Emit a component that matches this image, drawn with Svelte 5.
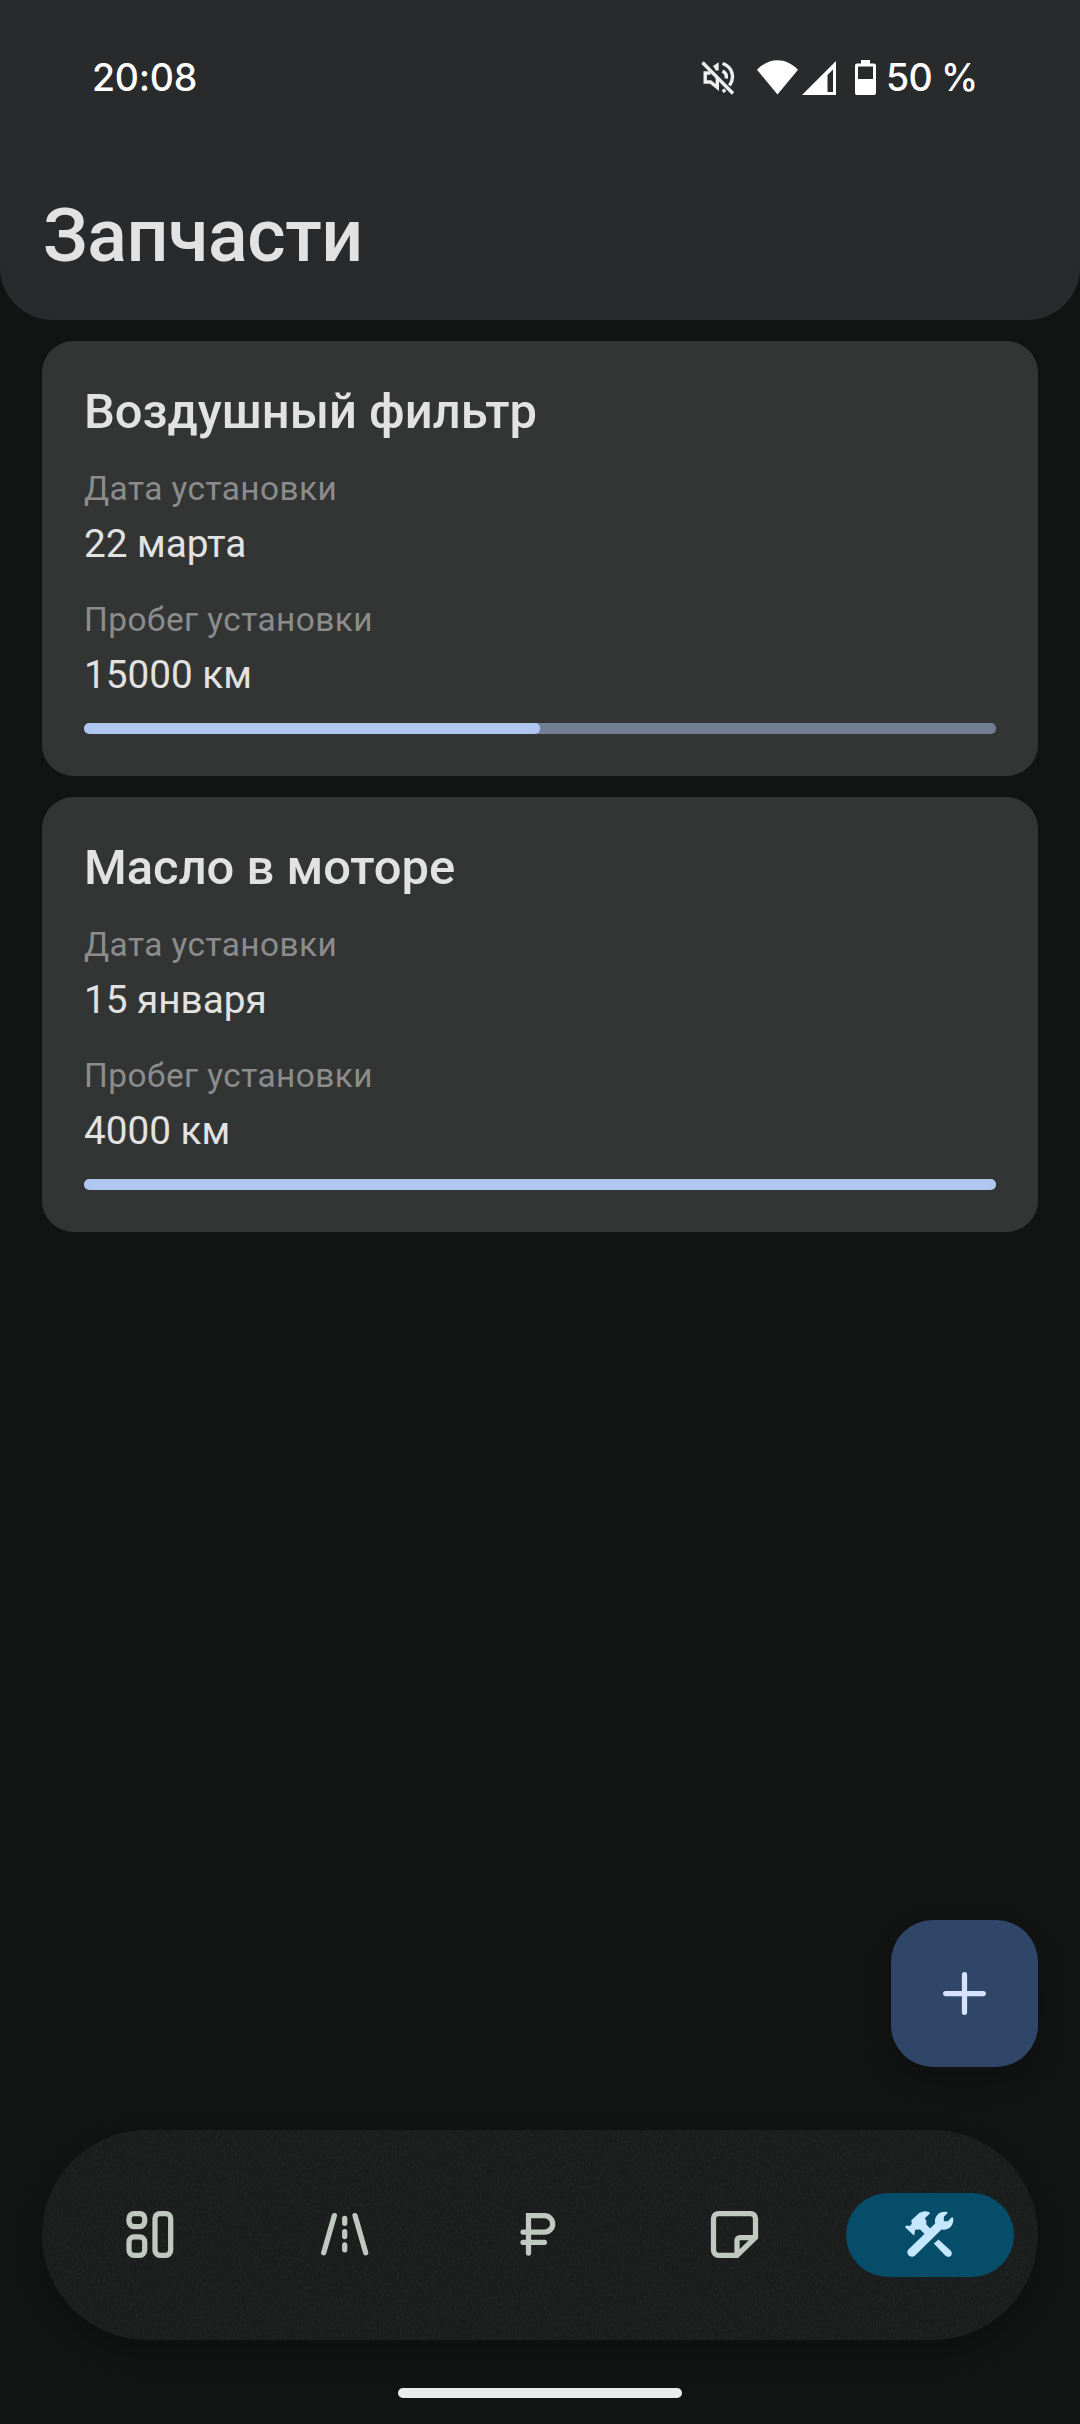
<script>
  const parts = [
    { name: 'Воздушный фильтр', date: '22 марта', mileage: '15000 км', wear: 50 },
    { name: 'Масло в моторе', date: '15 января', mileage: '4000 км', wear: 100 }
  ];
</script>

<div class="screen">
  <header>
    <div class="status">
      <span class="clock">20:08</span>
      <svg class="mute" viewBox="0 0 34 34"><g fill="none" stroke="#fff" stroke-width="3.4"><path d="M1.500 1.500 32 32.500" /><path d="M9.500 12H4.200v9H9.500L16.300 26.500V17" /><path d="M13 6.500 16 4.500V9.500" /><path d="M21.500 2.500C31 5.500 34.500 16 28.500 24.500M21.500 10C25 12 26 14.500 25 17.500M21.500 30.500l3-1.500" /></g></svg>
      <svg class="wifi" viewBox="0 0 41 35"><path d="M0 9.800C12-3 29-3 41 9.800L20.500 34.500Z" fill="#fff" /></svg>
      <svg class="signal" viewBox="0 0 34 34"><path fill-rule="evenodd" d="M34 0V34H0ZM31 8.500 25.500 14V31H31Z" fill="#fff" /></svg>
      <svg class="battery" viewBox="0 0 21 35"><path fill-rule="evenodd" d="M6 0H15V3.500H19a2 2 0 0 1 2 2V33a2 2 0 0 1-2 2H2a2 2 0 0 1-2-2V5.500a2 2 0 0 1 2-2H6ZM3 6.500V19H18V6.500Z" fill="#fff" /></svg>
      <span class="charge">50 %</span>
    </div>
    <h1>Запчасти</h1>
  </header>

  <main>
    {#each parts as part}
      <article>
        <h2>{part.name}</h2>
        <p class="label">Дата установки</p>
        <p class="value">{part.date}</p>
        <p class="label">Пробег установки</p>
        <p class="value">{part.mileage}</p>
        <div class="track"><div class="fill" style="width: {part.wear}%"></div></div>
      </article>
    {/each}
  </main>

  <button class="fab" aria-label="Добавить">
    <svg viewBox="0 0 63 63"><path d="M31.500 12.700V50.300M12.700 31.500H50.300" /></svg>
  </button>

  <nav>
    <svg class="grain" aria-hidden="true">
      <filter id="grain"><feTurbulence type="fractalNoise" baseFrequency="0.7 0.3" numOctaves="2" /><feColorMatrix values="0 0 0 0 1  0 0 0 0 1  0 0 0 0 1  0.100 0 0 0 -0.045" /></filter>
      <rect width="100%" height="100%" filter="url(#grain)" />
    </svg>
    <div class="item">
      <svg viewBox="0.500 1 63 63"><g><rect x="10.500" y="10.500" width="15.700" height="13" rx="5" /><rect x="10.500" y="33.800" width="15.700" height="18.500" rx="5" /><rect x="36.500" y="10.500" width="15.700" height="41.800" rx="5" /></g></svg>
    </div>
    <div class="item">
      <svg viewBox="1 1 63 63"><path d="M21.400 12.600 10.700 49.800M42 12.600 52.700 49.800M31.700 15.300v5M31.700 28.500v5M31.700 41.800v5" /></svg>
    </div>
    <div class="item">
      <svg viewBox="1 0.500 63 63"><path d="M20.500 49.500V12.200H36.500a8.200 8.200 0 0 1 0 16.400H15M15 38.800H36.500" /></svg>
    </div>
    <div class="item">
      <svg viewBox="1 1 63 63"><path d="M34 52.300H15.500a5 5 0 0 1-5-5V15.500a5 5 0 0 1 5-5H47.500a5 5 0 0 1 5 5V34.500ZM34 50V37.500a3 3 0 0 1 3-3H50.500" /></svg>
    </div>
    <div class="item active">
      <svg viewBox="55.500 40.500 189 189"><path d="M83 178 164 99C160 82 172 60 200 64L201 68 190 79 190 92 202 92 214 80 218 82C222 104 204 122 183 117L103 196C92 205 74 192 83 178Z" /><path d="M92 90 117 67Q130 59 144 64L149 68 133 83 138 92 137 101 151 116 134 132 119 117 104 118 101 136 74 110 76 106 90 106 94 98Z" /><path d="M160 159 174 147 211 181C220 193 206 205 195 196Z" /></svg>
    </div>
  </nav>

  <div class="handle"></div>
</div>

<style>
  :global(body) { background: #121413; }
  .screen {
    box-sizing: border-box;
    width: 1080px;
    height: 2424px;
    display: flex;
    flex-direction: column;
    background: #121413;
    color: #e2e2e2;
    font-family: Roboto, sans-serif;
    overflow: hidden;
  }
  header {
    box-sizing: border-box;
    height: 320px;
    background: #292a2c;
    border-radius: 0 0 52.5px 52.5px;
  }
  .status {
    display: flex;
    align-items: center;
    height: 155px;
    padding: 0 105px 0 92px;
    color: #fff;
    font: 500 37.5px/44px Inter, sans-serif;
  }
  .status svg { flex: none; }
  .clock { letter-spacing: -0.3px; margin-right: auto; }
  .mute { width: 34px; height: 34px; margin-right: 22.5px; opacity: .92; }
  .wifi { width: 41px; height: 35px; margin-right: 3.5px; }
  .signal { width: 34px; height: 34px; margin-right: 19.5px; }
  .battery { width: 21px; height: 35px; margin-right: 10px; }
  .charge { width: 89px; letter-spacing: -0.8px; white-space: nowrap; }
  h1 {
    margin: 38px 0 0 43px;
    font-weight: 500;
    font-size: 73.5px;
    line-height: 87px;
    letter-spacing: -0.4px;
  }
  main {
    display: flex;
    flex-direction: column;
    gap: 21px;
    padding: 21px 42px 0;
    flex: 1;
  }
  article {
    box-sizing: border-box;
    height: 435px;
    padding: 42px;
    border-radius: 31.5px;
    background: #333534;
  }
  h2, p { margin: 0; white-space: nowrap; }
  h2 { font-weight: 500; font-size: 48.9px; line-height: 58px; margin-bottom: 27px; }
  .label { font-size: 33.4px; line-height: 42px; letter-spacing: 0.45px; color: #8b8c8b; }
  .value { margin-top: 5px; font-size: 38.7px; line-height: 58px; }
  .value + .label { margin-top: 26px; }
  .track { height: 10.5px; margin-top: 19px; border-radius: 5px; background: #727e94; overflow: hidden; }
  .fill { height: 100%; border-radius: 5px; background: #afc6f1; }
  svg { display: block; }
  .fab {
    align-self: flex-end;
    display: flex;
    align-items: center;
    justify-content: center;
    width: 147px;
    height: 147px;
    margin: 0 42px 63px 0;
    padding: 0;
    border: 0;
    border-radius: 42px;
    background: #304669;
    box-shadow: 0 12px 28px rgba(0, 0, 0, .2);
  }
  .fab svg, .item svg {
    width: 63px;
    height: 63px;
    fill: none;
    stroke: #c0c9bf;
    stroke-width: 5.25px;
    stroke-linecap: round;
  }
  .fab svg { stroke: #d8e2ff; }
  nav {
    position: relative;
    box-sizing: border-box;
    display: flex;
    align-items: center;
    justify-content: space-between;
    height: 210px;
    margin: 0 42px;
    padding: 0 24px;
    border-radius: 105px;
    background: #1b1d1c;
    box-shadow: 0 12px 28px rgba(0, 0, 0, .2);
  }
  .grain { position: absolute; inset: 0; width: 100%; height: 100%; border-radius: 105px; overflow: hidden; }
  .item {
    position: relative;
    display: flex;
    align-items: center;
    justify-content: center;
    width: 168px;
    height: 84px;
    border-radius: 42px;
  }
  .active { background: #064d69; }
  .item.active svg { fill: #c5e7ff; stroke: none; }
  .handle { flex: none; width: 284px; height: 10px; margin: 48px auto 26px; border-radius: 5px; background: #ebedec; }
</style>
